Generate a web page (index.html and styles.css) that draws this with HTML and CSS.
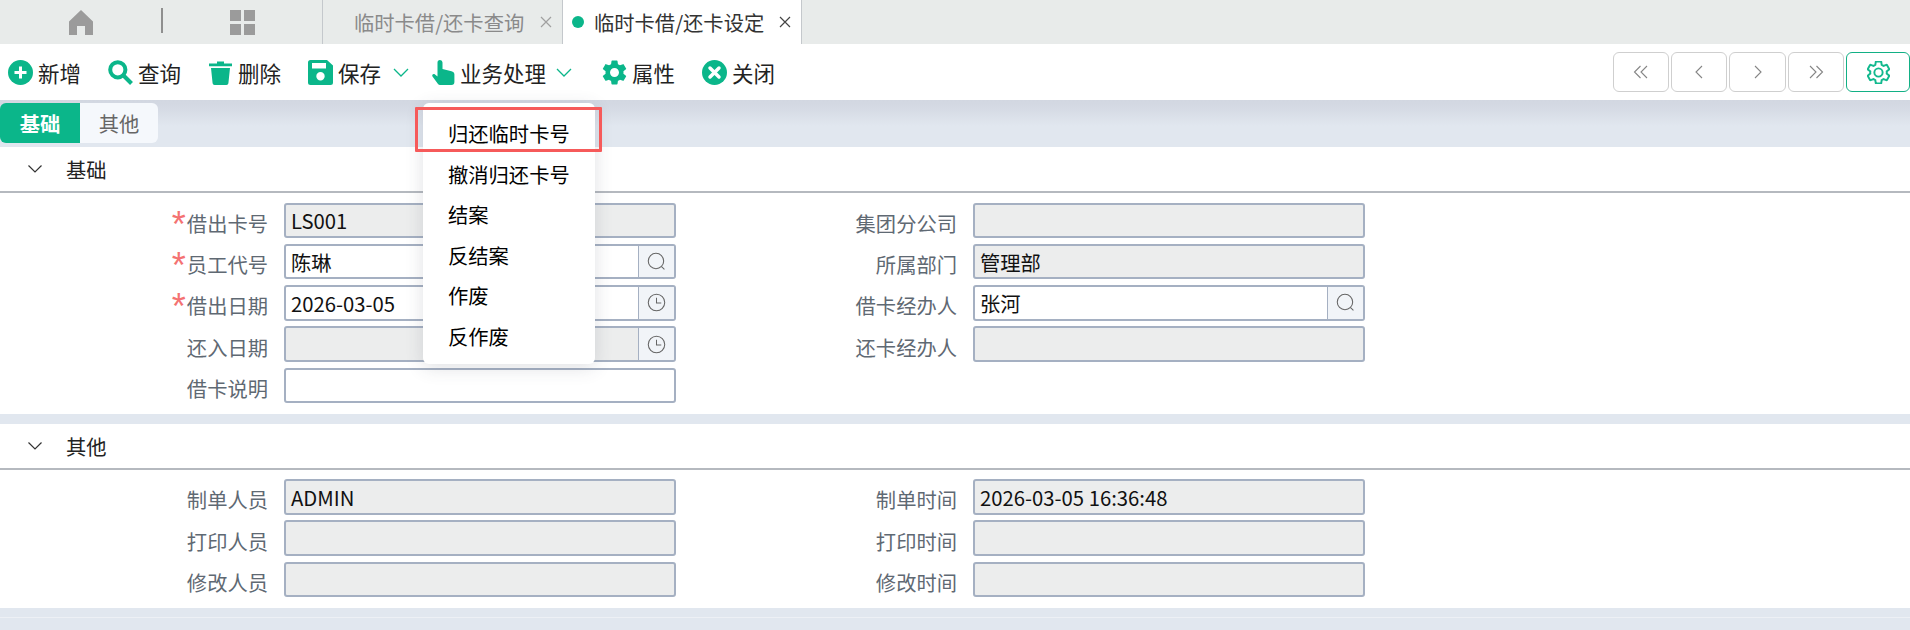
FILE: index.html
```html
<!DOCTYPE html>
<html lang="zh-CN">
<head>
<meta charset="utf-8">
<title>临时卡借/还卡设定</title>
<link rel="stylesheet" href="styles.css">
</head>
<body>
<div class="page">
  <header class="tabbar">
    <div class="tab-home">
      <svg class="ico-home" viewBox="0 0 24 25"><path d="M12 0 24 11.5V25h-8v-9H8v9H0V11.5z"/></svg>
    </div>
    <span class="tab-sep"></span>
    <div class="tab-grid">
      <svg class="ico-grid" viewBox="0 0 25 25"><path d="M0 0h11v11H0zM14 0h11v11H14zM0 14h11v11H0zM14 14h11v11H14z"/></svg>
    </div>
    <div class="tab tab-off"><span>临时卡借/还卡查询</span><svg class="tab-x" viewBox="0 0 12 12"><path d="m1 1 10 10M11 1 1 11"/></svg></div>
    <div class="tab tab-on"><b class="dot"></b><span>临时卡借/还卡设定</span><svg class="tab-x" viewBox="0 0 12 12"><path d="m1 1 10 10M11 1 1 11"/></svg></div>
  </header>

  <nav class="toolbar">
    <div class="tool t-add">
      <svg class="ti" viewBox="0 0 25 25"><circle cx="12.5" cy="12.5" r="12.5"/><path class="w" d="M11 6.5h3V11h4.500v3H14v4.500h-3V14H6.500v-3H11z"/></svg><span>新增</span>
    </div>
    <div class="tool t-find">
      <svg class="ti" viewBox="0 0 25 25"><circle class="ln" cx="9.800" cy="9.800" r="7.600"/><path class="ln" d="m15.500 15.500 8 8"/></svg><span>查询</span>
    </div>
    <div class="tool t-del">
      <svg class="ti" viewBox="0 0 25 25"><path d="M1 3.500h8V1.500h7v2h8v2.800H1zM3 8h19l-1.600 15.200a2 2 0 0 1-2 1.800H6.600a2 2 0 0 1-2-1.800z"/></svg><span>删除</span>
    </div>
    <div class="tool t-save">
      <svg class="ti" viewBox="0 0 25 25"><path fill-rule="evenodd" d="M2.500 0H19l6 5.500V22.500a2.500 2.500 0 0 1-2.500 2.500h-20A2.500 2.500 0 0 1 0 22.500v-20A2.500 2.500 0 0 1 2.500 0zM4 3v5.500h14V3zM12.500 12a4.200 4.200 0 1 0 0 8.400 4.200 4.200 0 0 0 0-8.400z"/></svg><span>保存</span>
      <svg class="chev" viewBox="0 0 16 9"><path d="m1 1 7 7 7-7"/></svg>
    </div>
    <div class="tool t-biz">
      <svg class="ti" viewBox="0 0 25 25"><path d="M6.500 2.500a2.500 2.500 0 0 1 5 0V9l9 2.200c1.600.4 2.900 1.400 2.900 3V22a3 3 0 0 1-3 3H9a2.500 2.500 0 0 1-2-1l-5.500-7.500c-1-1.500.8-3.300 2.200-2.200l2.800 2.200z"/></svg><span>业务处理</span>
      <svg class="chev" viewBox="0 0 16 9"><path d="m1 1 7 7 7-7"/></svg>
    </div>
    <div class="tool t-prop">
      <svg class="ti" viewBox="2 2 20 20"><path d="M19.140 12.940c.04-.3.06-.61.06-.94 0-.32-.02-.64-.07-.94l2.030-1.580a.49.49 0 0 0 .12-.61l-1.920-3.320a.488.488 0 0 0-.59-.22l-2.390.96c-.5-.38-1.030-.7-1.620-.94l-.36-2.540a.484.484 0 0 0-.48-.41h-3.840c-.24 0-.43.17-.47.41l-.36 2.540c-.59.24-1.130.57-1.620.94l-2.390-.96c-.22-.08-.47 0-.59.22L2.740 8.870c-.12.21-.08.47.12.61l2.030 1.580c-.05.3-.09.63-.09.94s.02.64.07.94l-2.030 1.580a.49.49 0 0 0-.12.61l1.920 3.320c.12.22.37.29.59.22l2.390-.96c.5.38 1.030.7 1.620.94l.36 2.540c.05.24.24.41.48.41h3.840c.24 0 .44-.17.47-.41l.36-2.540c.59-.24 1.130-.56 1.620-.94l2.390.96c.22.08.47 0 .59-.22l1.920-3.320c.12-.22.07-.47-.12-.61l-2.010-1.580zM12 15.600c-1.980 0-3.600-1.620-3.600-3.600s1.620-3.600 3.600-3.600 3.600 1.620 3.600 3.600-1.620 3.600-3.600 3.600z"/></svg><span>属性</span>
    </div>
    <div class="tool t-close">
      <svg class="ti" viewBox="0 0 25 25"><circle cx="12.500" cy="12.500" r="12.500"/><path class="xw" d="m8 8 9 9M17 8l-9 9"/></svg><span>关闭</span>
    </div>
    <div class="pager">
      <button class="pg pg-a"><svg viewBox="0 0 16 16"><path d="M7.500 2 1.500 8l6 6M14 2 8 8l6 6"/></svg></button>
      <button class="pg pg-b"><svg viewBox="0 0 16 16"><path d="M11 2 5 8l6 6"/></svg></button>
      <button class="pg pg-c"><svg viewBox="0 0 16 16"><path d="m5 2 6 6-6 6"/></svg></button>
      <button class="pg pg-d"><svg viewBox="0 0 16 16"><path d="m2 2 6 6-6 6M8.500 2l6 6-6 6"/></svg></button>
      <button class="pg-set"><svg viewBox="2 2 20 20"><path d="M19.140 12.940c.04-.3.06-.61.06-.94 0-.32-.02-.64-.07-.94l2.030-1.580a.49.49 0 0 0 .12-.61l-1.920-3.320a.488.488 0 0 0-.59-.22l-2.390.96c-.5-.38-1.030-.7-1.620-.94l-.36-2.540a.484.484 0 0 0-.48-.41h-3.840c-.24 0-.43.17-.47.41l-.36 2.540c-.59.24-1.130.57-1.620.94l-2.390-.96c-.22-.08-.47 0-.59.22L2.740 8.870c-.12.21-.08.47.12.61l2.030 1.580c-.05.3-.09.63-.09.94s.02.64.07.94l-2.030 1.580a.49.49 0 0 0-.12.61l1.920 3.320c.12.22.37.29.59.22l2.390-.96c.5.38 1.030.7 1.620.94l.36 2.540c.05.24.24.41.48.41h3.840c.24 0 .44-.17.47-.41l.36-2.540c.59-.24 1.130-.56 1.620-.94l2.390.96c.22.08.47 0 .59-.22l1.920-3.320c.12-.22.07-.47-.12-.61l-2.010-1.580zM12 15.600c-1.980 0-3.600-1.620-3.600-3.600s1.620-3.600 3.600-3.600 3.600 1.620 3.600 3.600-1.620 3.600-3.600 3.600z"/></svg></button>
    </div>
  </nav>

  <main class="content">
    <div class="subtabs">
      <div class="st st-on">基础</div>
      <div class="st st-off">其他</div>
    </div>

    <section class="sec">
      <div class="sec-head"><svg class="sec-chev" viewBox="0 0 14 8"><path d="m.5.5 6.500 6.500L13.500.5"/></svg><span>基础</span></div>
      <div class="form">
        <label class="lb"><em>*</em>借出卡号</label><div class="fd off">LS001</div>
        <label class="lb">集团分公司</label><div class="fd off"></div>

        <label class="lb"><em>*</em>员工代号</label>
        <div class="fd"><span class="val">陈琳</span><span class="add"><svg viewBox="0 0 18 18"><circle cx="8.500" cy="8.500" r="7.300"/><path d="m13.800 13.800 2.700 2.700"/></svg></span></div>
        <label class="lb">所属部门</label><div class="fd off">管理部</div>

        <label class="lb"><em>*</em>借出日期</label>
        <div class="fd"><span class="val">2026-03-05</span><span class="add"><svg viewBox="0 0 18 18"><circle cx="9" cy="9" r="7.800"/><path d="M9 4.500V9.500H13.500"/></svg></span></div>
        <label class="lb">借卡经办人</label>
        <div class="fd"><span class="val">张河</span><span class="add"><svg viewBox="0 0 18 18"><circle cx="8.500" cy="8.500" r="7.300"/><path d="m13.800 13.800 2.700 2.700"/></svg></span></div>

        <label class="lb">还入日期</label>
        <div class="fd off"><span class="val"></span><span class="add"><svg viewBox="0 0 18 18"><circle cx="9" cy="9" r="7.800"/><path d="M9 4.500V9.500H13.500"/></svg></span></div>
        <label class="lb">还卡经办人</label><div class="fd off"></div>

        <label class="lb">借卡说明</label><div class="fd"></div>
      </div>
    </section>

    <section class="sec sec-b">
      <div class="sec-head"><svg class="sec-chev" viewBox="0 0 14 8"><path d="m.5.5 6.500 6.500L13.500.5"/></svg><span>其他</span></div>
      <div class="form">
        <label class="lb">制单人员</label><div class="fd off">ADMIN</div>
        <label class="lb">制单时间</label><div class="fd off">2026-03-05 16:36:48</div>
        <label class="lb">打印人员</label><div class="fd off"></div>
        <label class="lb">打印时间</label><div class="fd off"></div>
        <label class="lb">修改人员</label><div class="fd off"></div>
        <label class="lb">修改时间</label><div class="fd off"></div>
      </div>
    </section>
    <div class="foot-line"></div>
  </main>

  <ul class="menu">
    <li>归还临时卡号</li>
    <li>撤消归还卡号</li>
    <li>结案</li>
    <li>反结案</li>
    <li>作废</li>
    <li>反作废</li>
  </ul>
  <div class="mark"></div>
</div>
</body>
</html>
```

FILE: styles.css
```css
* { box-sizing: border-box; }
html, body { margin: 0; padding: 0; }
body {
  font-family: "Noto Sans CJK SC", "Noto Sans", sans-serif;
  font-size: 20.3px;
  color: #1a1a1a;
  background: #e1e7ef;
  overflow: hidden;
}
.page { position: relative; width: 1910px; height: 630px; overflow: hidden; }

/* top tab strip */
.tabbar {
  display: flex;
  align-items: stretch;
  height: 44px;
  background: #e8ebea;
}
.tab-home { width: 161px; display: flex; align-items: center; padding-left: 69px; }
.ico-home { width: 24px; height: 25px; fill: #9b9b9b; }
.tab-sep { width: 2px; height: 25px; margin-top: 8px; background: #8f8f8f; }
.tab-grid { width: 159px; display: flex; align-items: center; padding-left: 67px; }
.ico-grid { width: 25px; height: 25px; fill: #9b9b9b; }
.tab { display: flex; align-items: center; white-space: nowrap; flex: none; }
.tab-off {
  width: 240px;
  padding-left: 31px;
  color: #8a8a8a;
  border-left: 1px solid #c4c8cc;
}
.tab-on {
  width: 240px;
  padding-left: 9px;
  background: #fff;
  color: #333;
  border-left: 1px solid #c4c8cc;
  border-right: 1px solid #c4c8cc;
}
.tab-x { width: 12px; height: 12px; margin-left: 16px; flex: none; fill: none; stroke: #a0a0a0; stroke-width: 1.200; }
.tab-on .tab-x { stroke: #444; margin-left: 15px; }
.dot { width: 12px; height: 12px; border-radius: 50%; background: #0bb68a; margin-right: 10px; flex: none; }

/* toolbar */
.toolbar {
  display: flex;
  align-items: center;
  height: 56px;
  background: #fff;
  padding-left: 8px;
  font-size: 21.500px;
  color: #222;
}
.tool { display: flex; align-items: center; gap: 5px; white-space: nowrap; }
.ti { width: 25px; height: 25px; fill: #0bb68a; flex: none; }
.ti .w { fill: #fff; }
.ti .ln { fill: none; stroke: #0bb68a; stroke-width: 4; }
.ti .xw { fill: none; stroke: #fff; stroke-width: 3.500; stroke-linecap: round; }
.chev { width: 16px; height: 9px; fill: none; stroke: #0bb68a; stroke-width: 1.300; margin-left: 7px; flex: none; }
.t-add { margin-right: 27px; }
.t-find { margin-right: 27px; }
.t-del { margin-right: 27px; }
.t-save { margin-right: 22px; }
.t-biz { gap: 4px; margin-right: 30px; }
.t-biz .chev { margin-left: 6px; }
.t-prop { margin-right: 27px; }

.pager { display: flex; margin-left: auto; gap: 2px; align-items: stretch; height: 40px; }
.pg, .pg-set {
  display: flex;
  align-items: center;
  justify-content: center;
  height: 40px;
  padding: 0;
  background: #fff;
  border: 1px solid #cfcfcf;
  border-radius: 6px;
}
.pg-a { width: 56px; }
.pg-b { width: 56px; }
.pg-c { width: 57px; }
.pg-d { width: 56px; }
.pg svg { width: 16px; height: 16px; fill: none; stroke: #858585; stroke-width: 1.100; }
.pg-set { width: 64px; border-color: #12b085; }
.pg-set svg { width: 23px; height: 23px; fill: none; stroke: #12b98e; stroke-width: 1.700; }

/* content */
.content {
  background: linear-gradient(#d2d7e1 0, #d5dae4 8px, #e1e7ef 26px);
  padding-top: 3px;
  height: 530px;
}
.subtabs { display: flex; height: 40px; margin-bottom: 4px; }
.st { display: flex; align-items: center; justify-content: center; }
.st-on { width: 80px; background: #0bb68a; color: #fff; font-weight: 700; border-radius: 6px 0 0 6px; }
.st-off { width: 78px; background: #f5f8fc; color: #666; border-radius: 0 6px 6px 0; }

.sec { background: #fff; }
.sec-b { margin-top: 10px; }
.sec-head {
  display: flex;
  align-items: center;
  height: 46px;
  padding-left: 28px;
  gap: 24px;
  border-bottom: 2px solid #b5b9bf;
  color: #222;
}
.sec-chev { width: 14px; height: 8px; fill: none; stroke: #333; stroke-width: 1.200; }

.form {
  display: grid;
  grid-template-columns: 268px 408px 281px 408px;
  grid-auto-rows: 35.500px;
  row-gap: 5.800px;
  padding: 9.500px 0 10.500px;
}
.lb {
  display: flex;
  justify-content: flex-end;
  align-items: center;
  padding-top: 5px;
  color: #5f6973;
  white-space: nowrap;
}
.lb em {
  font-style: normal;
  font-size: 36px;
  line-height: 1;
  color: #f47272;
  margin-right: 1px;
  margin-top: -2px;
  height: 30px;
  font-family: "Liberation Sans", sans-serif;
}
.fd {
  display: flex;
  align-items: center;
  margin-left: 16px;
  border: 2px solid #a5b0c2;
  border-radius: 3px;
  background: #fff;
  padding-left: 5px;
  color: #111;
  overflow: hidden;
}
.off { background: #eceded; }
.val { flex: 1; }
.add {
  flex: none;
  width: 36px;
  align-self: stretch;
  display: flex;
  align-items: center;
  justify-content: center;
  background: #f1f4f8;
  border-left: 1px solid #a5b0c2;
}
.add svg { width: 19px; height: 19px; fill: none; stroke: #666; stroke-width: 1; }
.foot-line { height: 10px; border-bottom: 1px solid #edf0f5; }

/* popup menu */
.menu {
  position: absolute;
  left: 423px;
  top: 103px;
  width: 172px;
  height: 261px;
  margin: 0;
  padding: 10px 0 0 25px;
  list-style: none;
  background: #fff;
  border-radius: 6px;
  box-shadow: 0 4px 18px rgba(60, 70, 90, 0.16);
  color: #000;
}
.menu li { height: 40.600px; line-height: 40.600px; white-space: nowrap; }

/* red annotation box */
.mark {
  position: absolute;
  left: 415px;
  top: 107px;
  width: 187px;
  height: 45px;
  border: 3px solid #f65a5a;
  border-radius: 1px;
}
```
